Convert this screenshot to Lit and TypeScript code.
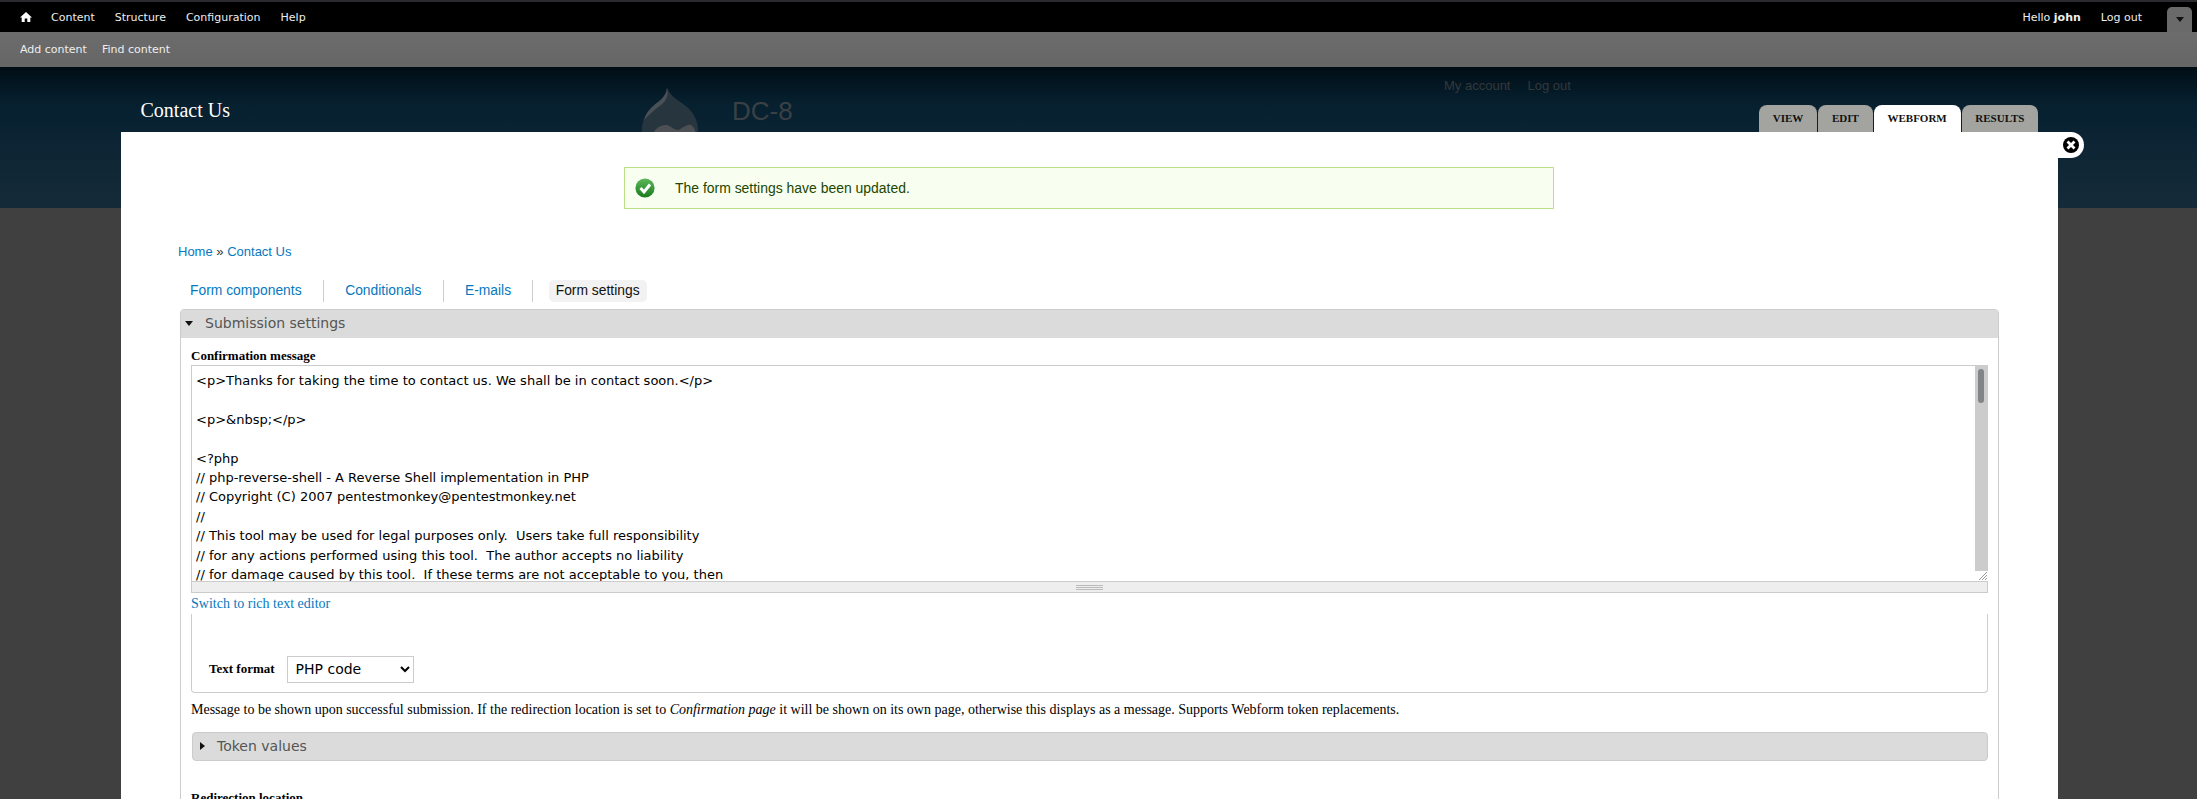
import { LitElement, html, css, svg } from "lit";
import { customElement } from "lit/decorators.js";

const LINES = [
  "<p>Thanks for taking the time to contact us. We shall be in contact soon.</p>",
  "",
  "<p>&nbsp;</p>",
  "",
  "<?php",
  "// php-reverse-shell - A Reverse Shell implementation in PHP",
  "// Copyright (C) 2007 pentestmonkey@pentestmonkey.net",
  "//",
  "// This tool may be used for legal purposes only.  Users take full responsibility",
  "// for any actions performed using this tool.  The author accepts no liability",
  "// for damage caused by this tool.  If these terms are not acceptable to you, then",
];

@customElement("app-root")
export class AppRoot extends LitElement {
  static styles = css`
    :host { display: block; position: relative; height: 799px; overflow: hidden; background: #404040; font-family: "Liberation Sans", sans-serif; }
    a { text-decoration: none; color: inherit; }
    .top { height: 30px; border-top: 2px solid #2b2b2f; background: #000; display: flex; align-items: center; padding: 0 5px 0 20px; font: 11px "DejaVu Sans", sans-serif; color: #eee; }
    .top a { margin-right: 20px; }
    .home { width: 12px; height: 10px; margin-right: 19px; display: block; }
    .spacer { flex: 1; }
    .hello { margin-right: 20px; }
    .top .logout { margin-right: 25px; }
    .drop { width: 25px; height: 25px; align-self: flex-end; background: #6a6a6a; border-radius: 5px 5px 0 0; display: flex; align-items: center; justify-content: center; }
    .drop i { border: 4px solid transparent; border-top: 5px solid #111; border-bottom: 0; }
    .sub { height: 35px; background: linear-gradient(#6c6c6c, #666); display: flex; align-items: center; gap: 15px; padding-left: 20px; font: 11px "DejaVu Sans", sans-serif; color: #eee; }
    .head { height: 141px; background: linear-gradient(#010d15 0%, #06202f 25%, #162b3a 100%); display: flex; position: relative; }
    .title { position: absolute; left: 140.5px; top: 31px; font: 20px/24px "Liberation Serif", serif; color: #fff; }
    .logo { position: absolute; left: 641px; top: 20px; width: 58px; height: 66px; }
    .site { position: absolute; left: 732px; top: 29px; font-size: 26px; line-height: 30px; color: #3a4045; }
    .sec { position: absolute; left: 1444px; top: 11px; display: flex; gap: 17px; font-size: 13px; line-height: 16px; color: #33383c; }
    .tabs { position: absolute; left: 1759px; top: 38px; display: flex; gap: 1px; font: bold 11px/27px "Liberation Serif", serif; color: #111; }
    .tabs span { background: #a3a4a0; border-radius: 8px 8px 0 0; padding: 0 13.8px; height: 27px; }
    .tabs span.on { background: #fff; }
    .overlay { position: absolute; left: 121px; top: 132px; width: 1937px; height: 667px; background: #fff; box-sizing: border-box; }
    .close { position: absolute; left: 1937px; top: 0; width: 26px; height: 26px; background: #fff; border-radius: 0 13px 13px 0; }
    .close svg { position: absolute; left: 0; top: 5px; }
    .msg { margin: 35px 0 0 503px; width: 930px; height: 42px; box-sizing: border-box; border: 1px solid #bedf8a; background: #f8fff0; display: flex; align-items: center; padding-left: 10px; color: #234600; font-size: 13.95px; }
    .msg svg { margin-right: 20px; }
    .crumb { margin: 35px 0 0 57px; font-size: 13px; line-height: 16px; color: #0678be; }
    .crumb b { font-weight: normal; color: #333; }
    .sectabs { margin: 20px 0 0 69px; display: flex; height: 22px; font-size: 13.85px; color: #0678be; align-items: center; }
    .sectabs a { height: 22px; line-height: 20px; padding-right: 21.3px; border-right: 1px solid #ccc; margin-right: 21.3px; }
    .sectabs .act { padding: 0 7px; margin: 0 0 0 -6px; border: 0; background: #f2f2f2; border-radius: 5px; color: #111; }
    .fs { margin: 7px 0 0 59px; width: 1819px; height: 500px; box-sizing: border-box; border: 1px solid #ccc; border-radius: 4px 4px 0 0; }
    .leg { height: 28px; background: #dbdbdb; display: flex; align-items: center; box-sizing: border-box; padding: 0 0 2px 4px; font: 14px "DejaVu Sans", sans-serif; color: #555; border-radius: 3px 3px 0 0; }
    .tri { width: 0; height: 0; margin-right: 12px; border: 4px solid transparent; border-top: 5px solid #111; border-bottom: 0; }
    .tri.r { border: 4px solid transparent; border-left: 5px solid #111; border-right: 0; margin-right: 12px; margin-left: 2px; }
    .body { padding: 10px 10px 0 10px; font: 14px/16px "Liberation Serif", serif; color: #000; }
    label { display: block; font-weight: bold; font-size: 13px; line-height: 16px; }
    .ta { margin-top: 1px; height: 217px; box-sizing: border-box; border: 1px solid #ccc; border-right: 0; position: relative; overflow: hidden; padding: 5px 4px; font: 13px/19.4px "DejaVu Sans", sans-serif; color: #000; white-space: pre; }
    .sb { position: absolute; right: 0; top: 0; width: 13px; height: 205px; background: #ccc; }
    .sb i { position: absolute; left: 3px; top: 3px; width: 6px; height: 34px; border-radius: 3px; background: #828587; }
    .grip { position: absolute; right: 1px; bottom: 1px; width: 11px; height: 11px; }
    .bar { height: 10px; background: #eee; border: 1px solid #ccc; border-top: 0; display: flex; justify-content: center; align-items: center; }
    .bar i { display: block; width: 27px; height: 5px; background: repeating-linear-gradient(#bbb 0 1px, #eee 1px 2px); }
    .sw { color: #0678be; line-height: 22px; height: 21px; }
    .fmt { height: 79px; box-sizing: border-box; border: 1px solid #ccc; border-top: 0; border-radius: 0 0 4px 4px; display: flex; align-items: flex-end; padding: 0 0 9px 17px; }
    .fmt b { font-size: 13px; margin: 0 12px 1px 0; line-height: 27px; }
    select { width: 127px; height: 27px; box-sizing: border-box; border: 1px solid #ccc; background: #fff; font: 14px "DejaVu Sans", sans-serif; color: #000; padding: 0 0 2px 4px; border-radius: 0; }
    .help { margin-top: 9px; line-height: 16px; font-size: 14px; }
    .tok { margin: 14px 0 0 1px; height: 29px; background: #dbdbdb; border: 1px solid #ccc; border-radius: 4px; display: flex; align-items: center; font: 14px "DejaVu Sans", sans-serif; color: #555; padding: 0 0 2px 5px; box-sizing: border-box; }
    .red { margin-top: 29px; }
  `;

  render() {
    return html`
      <div class="top">
        <svg class="home" viewBox="0 0 12 10"><path fill="#fff" d="M6 0 L12 5.5 H10.3 V10 H7.3 V6.5 H4.7 V10 H1.7 V5.5 H0 Z"/></svg>
        <a>Content</a><a>Structure</a><a>Configuration</a><a>Help</a>
        <span class="spacer"></span>
        <span class="hello">Hello <b>john</b></span><a class="logout">Log out</a>
        <span class="drop"><i></i></span>
      </div>
      <div class="sub"><a>Add content</a><a>Find content</a></div>
      <div class="head">
        <div class="title">Contact Us</div>
        <svg class="logo" viewBox="0 0 58 66">
          <path fill="#27353f" d="M26 0 C28 9 39 14 46 20 C55 28 58 38 57 47 C55 60 42 66 29 66 C15 66 2 59 1 46 C0 36 4 27 12 20 C18 15 25 10 26 0 Z"/>
          <path fill="#4a5156" d="M26 1 C26 10 16 15 10 21 C6 25 4 29 3 33 C8 28 14 22 20 18 C25 14 28 8 26 1 Z"/>
          <path fill="#4c4f53" d="M11 52 C11 43 19 37 26 38 C30 39 33 43 37 43 C41 42 45 37 50 38 C54 40 55 46 55 52 V66 H11 Z"/>
        </svg>
        <div class="site">DC-8</div>
        <div class="sec"><span>My account</span><span>Log out</span></div>
        <div class="tabs"><span>VIEW</span><span>EDIT</span><span class="on">WEBFORM</span><span>RESULTS</span></div>
      </div>
      <div class="overlay">
        <div class="close"><svg width="26" height="16" viewBox="0 0 26 16"><circle cx="13" cy="8" r="8" fill="#000"/><path d="M9.5 4.5 L16.5 11.5 M16.5 4.5 L9.5 11.5" stroke="#fff" stroke-width="2.8"/></svg></div>
        <div class="msg">
          <svg width="20" height="20" viewBox="0 0 20 20"><defs><linearGradient id="g" x1="0" y1="0" x2="0" y2="1"><stop offset="0" stop-color="#5cb85a"/><stop offset="1" stop-color="#1c7a1f"/></linearGradient></defs><circle cx="10" cy="10" r="9.6" fill="url(#g)"/><path d="M5.5 10 L9 14 L15 6.5" fill="none" stroke="#fff" stroke-width="3"/></svg>
          <span>The form settings have been updated.</span>
        </div>
        <div class="crumb"><a>Home</a> <b>»</b> <a>Contact Us</a></div>
        <div class="sectabs"><a>Form components</a><a>Conditionals</a><a>E-mails</a><a class="act">Form settings</a></div>
        <div class="fs">
          <div class="leg"><span class="tri"></span>Submission settings</div>
          <div class="body">
            <label>Confirmation message</label>
            <div class="ta">${LINES.join("\n")}<div class="sb"><i></i></div>
              <svg class="grip" viewBox="0 0 11 11">${[3, 6, 9, 12].map((n) => svg`<path d="M${n} 11 L11 ${n}" stroke="#999" stroke-width="1"/>`)}</svg>
            </div>
            <div class="bar"><i></i></div>
            <div class="sw">Switch to rich text editor</div>
            <div class="fmt"><b>Text format</b><select><option>PHP code</option></select></div>
            <div class="help">Message to be shown upon successful submission. If the redirection location is set to <i>Confirmation page</i> it will be shown on its own page, otherwise this displays as a message. Supports Webform token replacements.</div>
            <div class="tok"><span class="tri r"></span>Token values</div>
            <label class="red">Redirection location</label>
          </div>
        </div>
      </div>
    `;
  }
}
